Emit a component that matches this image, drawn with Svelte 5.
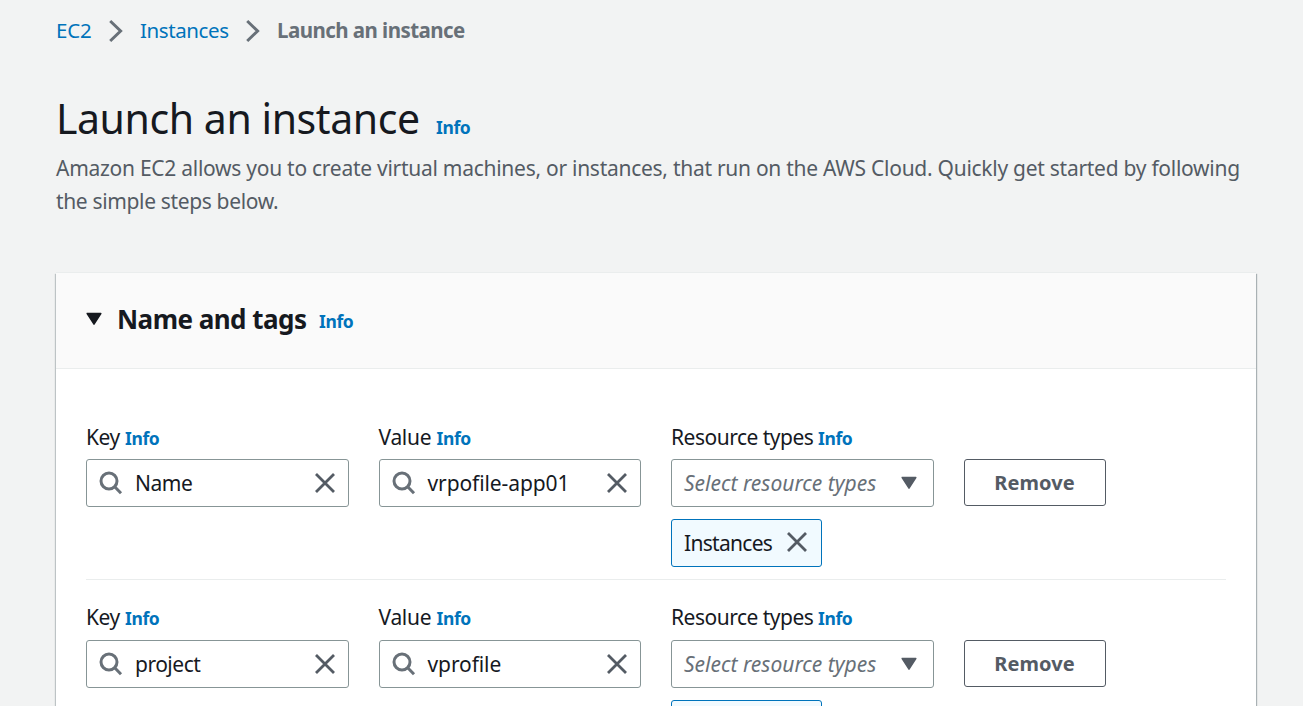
<script>
  const tags = [
    { key: 'Name', value: 'vrpofile-app01' },
    { key: 'project', value: 'vprofile' }
  ];
</script>

{#snippet chevron()}
  <svg class="chevron" width="16" height="24" viewBox="0 0 16 24"><path d="M2.2 2 12.6 12 2.2 22" /></svg>
{/snippet}

{#snippet caret()}
  <svg class="caret" width="16" height="14" viewBox="0 0 16 14"><path d="M1.2 1.5H14.8L8 12.2Z" /></svg>
{/snippet}

{#snippet cross()}
  <svg class="cross" width="22" height="22" viewBox="0 0 22 22"><path d="M2 2 20 20M20 2 2 20" /></svg>
{/snippet}

{#snippet search()}
  <svg class="search" width="24" height="24" viewBox="0 0 24 24"><circle cx="10" cy="10" r="8" /><path d="M15.7 15.7 22 22.3" /></svg>
{/snippet}

<main>
  <nav>
    <span class="link ec2">EC2</span>
    {@render chevron()}
    <span class="link mid">Instances</span>
    {@render chevron()}
    <span class="current">Launch an instance</span>
  </nav>

  <header>
    <h1><span class="title">Launch an instance</span><span class="info">Info</span></h1>
    <p><span class="line1">Amazon EC2 allows you to create virtual machines, or instances, that run on the AWS Cloud. Quickly get started by following</span><br /><span class="line2">the simple steps below.</span></p>
  </header>

  <section class="card">
    <div class="card-head">
      {@render caret()}
      <h2>Name and tags</h2>
      <span class="info">Info</span>
    </div>
    <div class="card-body">
      {#each tags as tag}
        <div class="row">
          <div class="field">
            <div class="label"><span class="t-key">Key</span><span class="info">Info</span></div>
            <div class="input">{@render search()}<span class="val key">{tag.key}</span>{@render cross()}</div>
          </div>
          <div class="field">
            <div class="label"><span class="t-value">Value</span><span class="info">Info</span></div>
            <div class="input">{@render search()}<span class="val">{tag.value}</span>{@render cross()}</div>
          </div>
          <div class="field">
            <div class="label"><span class="t-res">Resource types</span><span class="info">Info</span></div>
            <div class="input select"><span class="placeholder">Select resource types</span>{@render caret()}</div>
            <div class="token"><span class="t-inst">Instances</span>{@render cross()}</div>
          </div>
          <div class="field action">
            <button>Remove</button>
          </div>
        </div>
      {/each}
    </div>
  </section>
</main>

<style>
  :global(body) {
    margin: 0;
    background: #f2f3f3;
    overflow: hidden;
  }
  main {
    box-sizing: border-box;
    height: 706px;
    overflow: hidden;
    padding: 15px 47px 0 56px;
    font: 21px/32px 'Noto Sans', sans-serif;
    color: #16191f;
    white-space: nowrap;
  }
  svg {
    flex: none;
    fill: none;
    stroke: #545b64;
    stroke-width: 2.8;
  }
  nav {
    display: flex;
    align-items: center;
    height: 32px;
    font-size: 20.5px;
    line-height: 30px;
  }
  nav span {
    padding-bottom: 2px;
  }
  .chevron {
    stroke: #687078;
    stroke-width: 3;
  }
  .link {
    color: #0073bb;
  }
  .ec2 {
    width: 52px;
    letter-spacing: -0.2px;
  }
  .mid {
    width: 89px;
    margin: 0 16px;
    letter-spacing: -0.4px;
  }
  .current {
    margin-left: 16px;
    color: #687078;
    font-weight: 700;
    letter-spacing: -0.55px;
  }
  h1,
  h2,
  p {
    margin: 0;
  }
  h1 {
    display: flex;
    align-items: baseline;
    margin-top: 41px;
    height: 60px;
    font-size: 41px;
    line-height: 60px;
    font-weight: 400;
  }
  .title {
    width: 380px;
    letter-spacing: -0.43px;
  }
  .info {
    color: #0073bb;
    font-size: 17.5px;
    line-height: 20px;
    font-weight: 700;
    letter-spacing: -0.4px;
  }
  p {
    margin-top: 4px;
    color: #545b64;
    line-height: 33px;
  }
  .line1 {
    letter-spacing: -0.27px;
  }
  .line2 {
    letter-spacing: -0.35px;
  }
  .card {
    margin-top: 55px;
    width: 1200px;
    height: 500px;
    background: #fff;
    box-shadow: 0 -1px 0 #eaeded, 1px 1px 1px rgba(0, 28, 36, 0.3), -1px 1px 1px rgba(0, 28, 36, 0.22);
  }
  .card-head {
    box-sizing: border-box;
    display: flex;
    align-items: center;
    height: 96px;
    padding: 0 30px 4px;
    background: #fafafa;
    border-bottom: 1px solid #eaeded;
  }
  .card-head .caret path {
    fill: #16191f;
    stroke: #16191f;
  }
  .caret path {
    fill: #545b64;
    stroke-width: 1.5;
    stroke-linejoin: round;
  }
  h2 {
    width: 202px;
    margin-left: 15px;
    font-size: 26px;
    line-height: 40px;
    letter-spacing: -0.53px;
  }
  .card-head .info {
    margin-top: 4px;
  }
  .card-body {
    padding: 42px 30px 0;
  }
  .row {
    box-sizing: border-box;
    display: grid;
    grid-template-columns: repeat(4, 262.5px);
    column-gap: 30px;
    height: 169px;
    border-bottom: 1px solid #eaeded;
  }
  .row + .row {
    margin-top: 12px;
  }
  .label {
    display: flex;
    align-items: baseline;
    height: 48px;
    line-height: 52px;
  }
  .row + .row .label {
    line-height: 50px;
  }
  .row + .row button {
    line-height: 42px;
  }
  .label .info {
    transform: translateY(-0.5px);
  }
  .t-key {
    width: 39px;
    letter-spacing: -0.5px;
  }
  .t-value {
    width: 58px;
    letter-spacing: -0.3px;
  }
  .t-res {
    width: 147px;
    letter-spacing: -0.5px;
  }
  .input {
    box-sizing: border-box;
    display: flex;
    align-items: center;
    height: 48px;
    padding: 0 12px;
    border: 1px solid #879596;
    border-radius: 3px;
  }
  .search {
    stroke: #687078;
    stroke-width: 3;
  }
  .val {
    flex: 1;
    margin-left: 12px;
    letter-spacing: -0.1px;
  }
  .val.key {
    letter-spacing: -0.5px;
  }
  .select {
    justify-content: space-between;
    padding-right: 16px;
  }
  .placeholder {
    color: #687078;
    font-style: italic;
  }
  .token {
    box-sizing: border-box;
    display: flex;
    align-items: center;
    justify-content: space-between;
    width: 151px;
    height: 48px;
    margin-top: 12px;
    padding: 0 13px 0 12px;
    background: #f1faff;
    border: 1px solid #0073bb;
    border-radius: 3px;
  }
  .token .cross {
    margin-bottom: 2px;
  }
  .t-inst {
    letter-spacing: -0.7px;
  }
  .action {
    padding-top: 48px;
  }
  button {
    box-sizing: border-box;
    display: block;
    width: 142px;
    height: 47px;
    padding: 0;
    background: #fff;
    border: 1px solid #545b64;
    border-radius: 3px;
    color: #545b64;
    font: 700 20px/44px 'Noto Sans', sans-serif;
    letter-spacing: 0.1px;
  }
</style>
